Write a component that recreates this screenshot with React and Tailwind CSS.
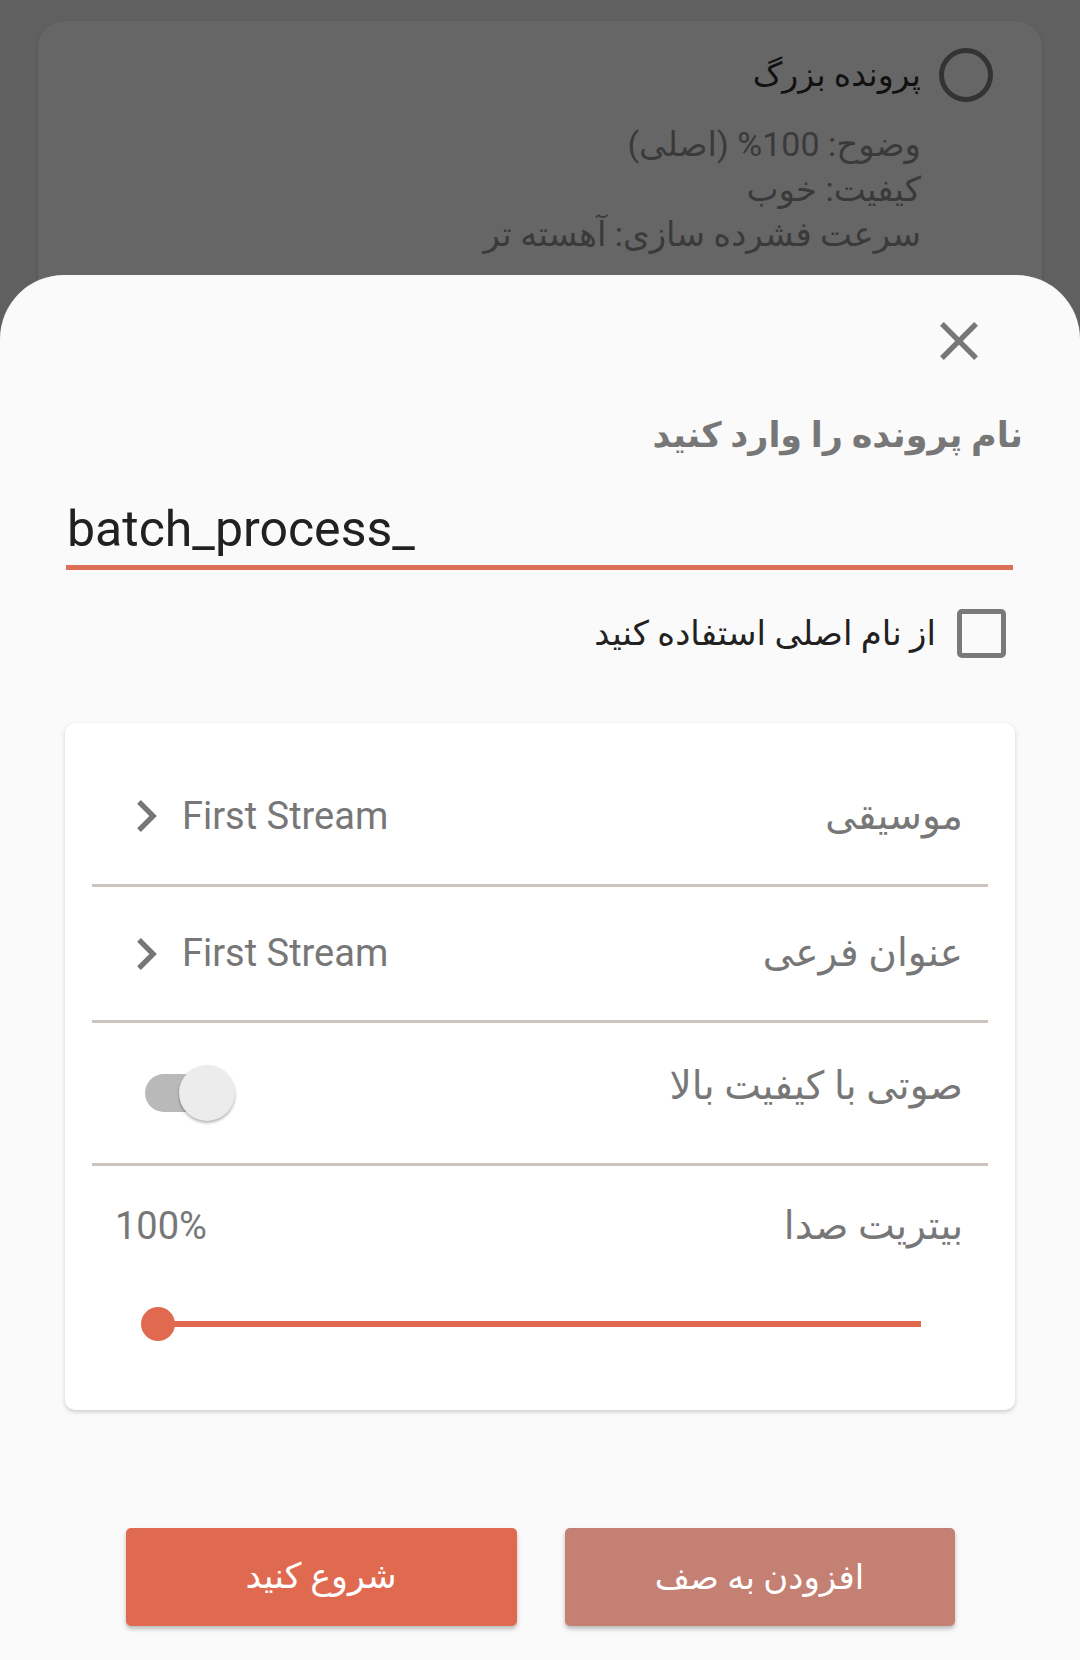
import React from "react";

function Chevron() {
  return (
    <svg width="20" height="32" viewBox="8.59 6 7.41 12" className="shrink-0">
      <path d="M10 6L8.59 7.41 13.17 12l-4.58 4.59L10 18l6-6z" fill="#777777" />
    </svg>
  );
}

function Divider() {
  return <div className="mx-[27px] h-[3px] bg-[#cdc3c1]" />;
}

export default function App() {
  return (
    <div className="relative w-[1080px] h-[1660px] overflow-hidden bg-[#606060] [font-family:Roboto,'DejaVu_Sans',sans-serif]">
      {/* dimmed card behind the sheet */}
      <div dir="rtl" className="mx-[38px] mt-[21px] h-[330px] rounded-[26px] bg-[#666666] shadow-[0_1px_3px_rgba(0,0,0,0.2)] pt-[27px] pr-[49px]">
        <div className="flex items-center gap-[18px]">
          <div className="w-[54px] h-[54px] rounded-full border-[5px] border-[#333333] shrink-0" />
          <div className="text-[33px] leading-[54px] text-[#111111]">پرونده بزرگ</div>
        </div>
        <div className="mr-[72px] mt-[20px] text-[34px] leading-[45px] text-[#3a3a3a]">
          <div>وضوح: 100% (اصلی)</div>
          <div>کیفیت: خوب</div>
          <div>سرعت فشرده سازی: آهسته تر</div>
        </div>
      </div>

      {/* bottom sheet */}
      <div dir="rtl" className="absolute inset-x-0 top-[275px] bottom-0 rounded-t-[64px] bg-[#fafafa] flex flex-col">
        <div className="flex pr-[102px] pt-[47px]">
          <svg width="38" height="38" viewBox="5 5 14 14">
            <path
              d="M19 6.41L17.59 5 12 10.59 6.41 5 5 6.41 10.59 12 5 17.59 6.41 19 12 13.41 17.59 19 19 17.59 13.41 12z"
              fill="#777777"
            />
          </svg>
        </div>

        <div className="mt-[52px] pr-[57px] text-[35px] leading-[48px] font-semibold text-[#777777]">
          نام پرونده را وارد کنید
        </div>

        <div className="mt-[40px] ml-[66px] mr-[67px] border-b-[5px] border-[#dc6f58] pb-[7px]">
          <div dir="ltr" className="pl-[1px] text-[50px] leading-[58px] text-[#212121]">batch_process_</div>
        </div>

        <div className="mt-[39px] pr-[74px] flex items-center gap-[21px]">
          <div className="w-[49px] h-[49px] rounded-[5px] border-[5px] border-[#7a7a7a] shrink-0" />
          <div className="text-[34px] leading-[49px] text-[#212121]">از نام اصلی استفاده کنید</div>
        </div>

        <div className="mt-[65px] mx-[65px] h-[687px] rounded-[10px] bg-white shadow-[0_2px_4px_rgba(0,0,0,0.18)] pt-[25px]">
          <div className="mx-[27px] h-[136px] flex items-center justify-between pr-[25px] pl-[45px]">
            <div className="text-[39px] text-[#777777]">موسیقی</div>
            <div dir="ltr" className="flex items-center gap-[25px]">
              <Chevron />
              <span className="text-[38px] text-[#777777]">First Stream</span>
            </div>
          </div>
          <Divider />
          <div className="mx-[27px] h-[133px] flex items-center justify-between pr-[25px] pl-[45px]">
            <div className="text-[39px] text-[#777777]">عنوان فرعی</div>
            <div dir="ltr" className="flex items-center gap-[25px]">
              <Chevron />
              <span className="text-[38px] text-[#777777]">First Stream</span>
            </div>
          </div>
          <Divider />
          <div className="mx-[27px] h-[140px] flex items-center justify-between pr-[25px] pl-[53px]">
            <div className="text-[39px] text-[#777777] -mt-[14px]">صوتی با کیفیت بالا</div>
            <div className="relative w-[89px] h-[38px] rounded-full bg-[#b9b9b9]">
              <div className="absolute right-[-1px] top-[-9px] w-[56px] h-[56px] rounded-full bg-[#ececec] shadow-[0_2px_3px_rgba(0,0,0,0.3)]" />
            </div>
          </div>
          <Divider />
          <div className="mx-[27px] h-[120px] flex items-center justify-between pr-[25px] pl-[23px]">
            <div className="text-[39px] text-[#777777]">بیتریت صدا</div>
            <div className="text-[38px] text-[#777777]">100%</div>
          </div>
          <div dir="ltr" className="relative mt-[21px] ml-[93px] mr-[94px] h-[34px] flex items-center">
            <div className="w-full h-[6px] bg-[#e0694f]" />
            <div className="absolute left-[-17px] top-0 w-[34px] h-[34px] rounded-full bg-[#e0694f]" />
          </div>
        </div>

        <div className="mt-[118px] flex justify-center gap-[48px]">
          <div className="w-[390px] h-[98px] rounded-[5px] bg-[#c48073] shadow-[0_3px_4px_rgba(0,0,0,0.25)] flex items-center justify-center text-[34px] text-white">
            افزودن به صف
          </div>
          <div className="w-[391px] h-[98px] rounded-[5px] bg-[#e06a50] shadow-[0_3px_4px_rgba(0,0,0,0.25)] flex items-center justify-center text-[35px] text-white">
            شروع کنید
          </div>
        </div>
      </div>
    </div>
  );
}
